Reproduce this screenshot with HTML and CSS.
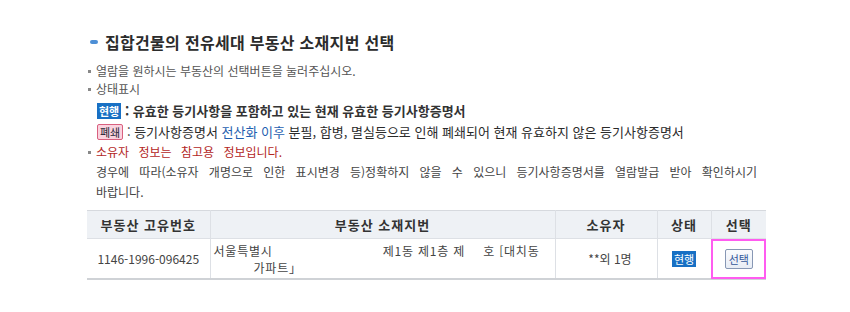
FILE: index.html
```html
<!DOCTYPE html>
<html lang="ko">
<head>
    <meta charset="UTF-8">
    <title>부동산 소재지번 선택</title>
    <link rel="stylesheet" href="styles.css">
</head>
<body>
    <div class="wrap">
        <h2 class="title"><span class="title-mark"></span>집합건물의 전유세대 부동산 소재지번 선택</h2>

        <ul class="guide">
            <li class="guide-item">열람을 원하시는 부동산의 선택버튼을 눌러주십시오.</li>
            <li class="guide-item">상태표시</li>
        </ul>
        <div class="legend">
            <p class="legend-row legend-strong"><span class="badge badge-now">현행</span> : 유효한 등기사항을 포함하고 있는 현재 유효한 등기사항증명서</p>
            <p class="legend-row"><span class="badge badge-closed">폐쇄</span> : 등기사항증명서 <span class="hl">전산화 이후</span> 분필, 합병, 멸실등으로 인해 폐쇄되어 현재 유효하지 않은 등기사항증명서</p>
        </div>
        <ul class="guide guide-notice">
            <li class="guide-item notice">소유자 정보는 참고용 정보입니다.</li>
        </ul>
        <p class="notice-desc">경우에 따라(소유자 개명으로 인한 표시변경 등)정확하지 않을 수 있으니 등기사항증명서를 열람발급 받아 확인하시기 바랍니다.</p>

        <table class="result">
            <colgroup>
                <col class="c-no">
                <col class="c-addr">
                <col class="c-owner">
                <col class="c-state">
                <col class="c-sel">
            </colgroup>
            <thead>
                <tr>
                    <th>부동산 고유번호</th>
                    <th>부동산 소재지번</th>
                    <th>소유자</th>
                    <th>상태</th>
                    <th>선택</th>
                </tr>
            </thead>
            <tbody>
                <tr>
                    <td class="num">1146-1996-096425</td>
                    <td class="addr">서울특별시<span class="gap gap-lg"></span>제1동 제1층 제<span class="gap gap-sm"></span>호 [대치동<br><span class="gap gap-in"></span>가파트」</td>
                    <td class="owner">**외 1명</td>
                    <td><span class="badge badge-now badge-table">현행</span></td>
                    <td class="sel-cell"><button class="btn-sel">선택</button></td>
                </tr>
            </tbody>
        </table>
    </div>
</body>
</html>
```

FILE: styles.css
```css
/* 기본 */
body {
    margin: 0;
    background: #fff;
    font-family: "Noto Sans CJK KR", "Noto Sans", sans-serif;
    font-size: 12px;
    color: #444;
}

.wrap {
    width: 679px;
    margin-left: 87px;
    padding-top: 32px;
}

/* 제목 */
.title {
    display: flex;
    align-items: center;
    margin: 0 0 10px;
    font-size: 16px;
    line-height: 20px;
    font-weight: bold;
    color: #2b2b2b;
    letter-spacing: 0.3px;
}

.title-mark {
    width: 8px;
    height: 4px;
    margin: 0 7px 0 3px;
    border-radius: 2px;
    background: #4d8fd6;
}

/* 안내 문구 */
.guide {
    list-style: none;
    margin: 0;
    padding: 0;
}

.guide-item {
    position: relative;
    padding-left: 9px;
    line-height: 18px;
    color: #555;
}

.guide-item::before {
    content: "";
    position: absolute;
    left: 1px;
    top: 8px;
    width: 3px;
    height: 3px;
    background: #888;
}

.legend {
    margin-top: 2px;
    padding-left: 10px;
}

.legend-row {
    margin: 0;
    height: 21px;
    line-height: 21px;
    font-size: 13px;
    color: #2a2a2a;
}

.legend-strong {
    font-weight: bold;
    color: #333;
}

.hl {
    color: #1f5fb0;
}

.badge {
    display: inline-block;
    height: 16px;
    padding: 0 2px;
    line-height: 16px;
    font-size: 11px;
    font-weight: bold;
    vertical-align: middle;
    position: relative;
    top: -1px;
}

.badge-now {
    background: #1870c4;
    color: #fff;
}

.badge-table {
    font-weight: normal;
}

.badge-closed {
    height: 14px;
    line-height: 14px;
    background: #fad3df;
    border: 1px solid #d9607f;
    border-radius: 2px;
    color: #223;
    font-weight: normal;
}

.guide-item.notice {
    line-height: 20px;
    color: #b3261e;
    word-spacing: 6px;
}

.guide-item.notice::before {
    top: 9px;
}

.notice-desc {
    margin: 0;
    padding: 0 9px;
    line-height: 20px;
    color: #444;
    text-align: justify;
    word-break: keep-all;
    word-spacing: 6px;
}

/* 결과 테이블 */
.result {
    width: 679px;
    margin-top: 8px;
    border-collapse: collapse;
    border-top: 1px solid #d6d9de;
    border-bottom: 2px solid #cfd2d6;
    table-layout: fixed;
}

.c-no { width: 123px; }
.c-addr { width: 345px; }
.c-owner { width: 102px; }
.c-state { width: 54px; }
.c-sel { width: 55px; }

.result th {
    height: 27px;
    padding: 0;
    background: #eef1f5;
    border-left: 1px solid #dde0e5;
    border-bottom: 1px solid #dde0e5;
    font-size: 13px;
    font-weight: bold;
    color: #333;
    letter-spacing: 1px;
}

.result th:first-child,
.result td:first-child {
    border-left: none;
}

.result td {
    height: 39px;
    padding: 0;
    border-left: 1px solid #dde0e5;
    text-align: center;
    color: #444;
}

.result td.addr {
    padding-left: 3px;
    text-align: left;
    line-height: 17px;
    letter-spacing: 0.8px;
}

.gap {
    display: inline-block;
}

.gap-lg { width: 110px; }
.gap-sm { width: 18px; }
.gap-in { width: 40px; }

.result td.owner {
    padding-left: 8px;
}

.sel-cell {
    outline: 2px solid #ff5cf0;
    outline-offset: -2px;
}

.btn-sel {
    height: 20px;
    padding: 0 3px;
    border: 1px solid #8797b4;
    border-radius: 2px;
    background: linear-gradient(#fafbfd, #e8edf5);
    font-family: inherit;
    font-size: 11px;
    line-height: 18px;
    color: #34589a;
    cursor: pointer;
}
```
